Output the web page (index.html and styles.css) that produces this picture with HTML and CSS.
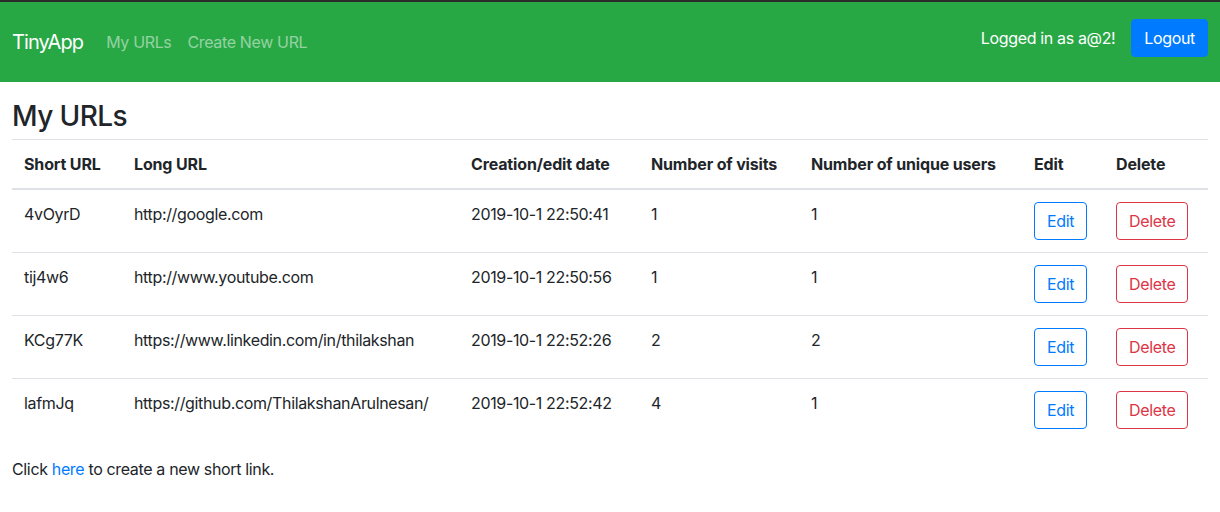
FILE: index.html
```html
<!DOCTYPE html>
<html lang="en">
<head>
<meta charset="utf-8">
<title>TinyApp</title>
<link rel="stylesheet" href="styles.css">
</head>
<body>
<div class="topstrip"></div>
<nav class="navbar">
  <div class="nav-left">
    <a class="brand" href="#">TinyApp</a>
    <a class="nav-link" href="#">My URLs</a>
    <a class="nav-link" href="#">Create New URL</a>
  </div>
  <div class="nav-right">
    <span class="login-text">Logged in as a@2!</span>
    <button class="btn btn-primary">Logout</button>
  </div>
</nav>
<main class="container">
  <h3 class="title">My URLs</h3>
  <table class="table">
    <colgroup>
      <col class="c1"><col class="c2"><col class="c3"><col class="c4"><col class="c5"><col class="c6"><col class="c7">
    </colgroup>
    <thead>
      <tr>
        <th>Short URL</th><th>Long URL</th><th>Creation/edit date</th><th>Number of visits</th><th>Number of unique users</th><th>Edit</th><th>Delete</th>
      </tr>
    </thead>
    <tbody>
      <tr>
        <td>4vOyrD</td><td>http://google.com</td><td>2019-10-1 22:50:41</td><td>1</td><td>1</td>
        <td><button class="btn btn-outline-primary">Edit</button></td>
        <td><button class="btn btn-outline-danger">Delete</button></td>
      </tr>
      <tr>
        <td>tij4w6</td><td>http://www.youtube.com</td><td>2019-10-1 22:50:56</td><td>1</td><td>1</td>
        <td><button class="btn btn-outline-primary">Edit</button></td>
        <td><button class="btn btn-outline-danger">Delete</button></td>
      </tr>
      <tr>
        <td>KCg77K</td><td>https://www.linkedin.com/in/thilakshan</td><td>2019-10-1 22:52:26</td><td>2</td><td>2</td>
        <td><button class="btn btn-outline-primary">Edit</button></td>
        <td><button class="btn btn-outline-danger">Delete</button></td>
      </tr>
      <tr>
        <td>lafmJq</td><td>https://github.com/ThilakshanArulnesan/</td><td>2019-10-1 22:52:42</td><td>4</td><td>1</td>
        <td><button class="btn btn-outline-primary">Edit</button></td>
        <td><button class="btn btn-outline-danger">Delete</button></td>
      </tr>
    </tbody>
  </table>
  <p class="footer-text">Click <a href="#" class="link">here</a> to create a new short link.</p>
</main>
</body>
</html>
```

FILE: styles.css
```css
* { box-sizing: border-box; }
html, body {
  margin: 0;
  padding: 0;
  background: #fff;
  font-family: "Inter", "Roboto", "Liberation Sans", sans-serif;
  font-size: 16px;
  line-height: 1.5;
  color: #212529;
  letter-spacing: -0.35px;
}
.topstrip {
  height: 2px;
  background: #2b2b2b;
}
.navbar {
  height: 80px;
  background: #28a745;
  display: flex;
  align-items: center;
  justify-content: space-between;
  padding: 0 12px;
}
.nav-left {
  display: flex;
  align-items: center;
}
.brand {
  color: #fff;
  font-size: 20px;
  line-height: 30px;
  text-decoration: none;
  margin-right: 15px;
  letter-spacing: -0.9px;
}
.nav-link {
  color: rgba(255,255,255,0.5);
  text-decoration: none;
  padding: 8px;
  line-height: 24px;
}
.nav-right {
  display: flex;
  align-items: center;
  gap: 16px;
  padding-bottom: 8px;
}
.login-text {
  color: #fff;
}
.btn {
  font-family: inherit;
  font-size: 16px;
  line-height: 24px;
  letter-spacing: -0.35px;
  padding: 6px 12px;
  border-radius: 4px;
  border: 1px solid transparent;
  background: transparent;
  cursor: pointer;
}
.btn-primary {
  background: #007bff;
  border-color: #007bff;
  color: #fff;
}
.btn-outline-primary {
  color: #007bff;
  border-color: #007bff;
}
.btn-outline-danger {
  color: #dc3545;
  border-color: #dc3545;
}
.container {
  padding: 18px 12px 0;
}
.title {
  font-size: 28px;
  font-weight: 500;
  line-height: 1.2;
  margin: 0 0 5px;
  letter-spacing: -0.6px;
}
.table {
  width: 100%;
  border-collapse: collapse;
  margin-bottom: 16px;
}
.c1 { width: 110px; }
.c2 { width: 337px; }
.c3 { width: 180px; }
.c4 { width: 160px; }
.c5 { width: 223px; }
.c6 { width: 82px; }
.c7 { width: 104px; }
.table th, .table td {
  text-align: left;
  vertical-align: top;
  padding: 12px;
  border-top: 1px solid #dee2e6;
}
.table th {
  font-weight: 700;
  letter-spacing: -0.15px;
}
.table thead th {
  border-bottom: 2px solid #dee2e6;
}
.footer-text {
  margin: 0 0 16px;
}
.link {
  color: #007bff;
  text-decoration: none;
}
```
